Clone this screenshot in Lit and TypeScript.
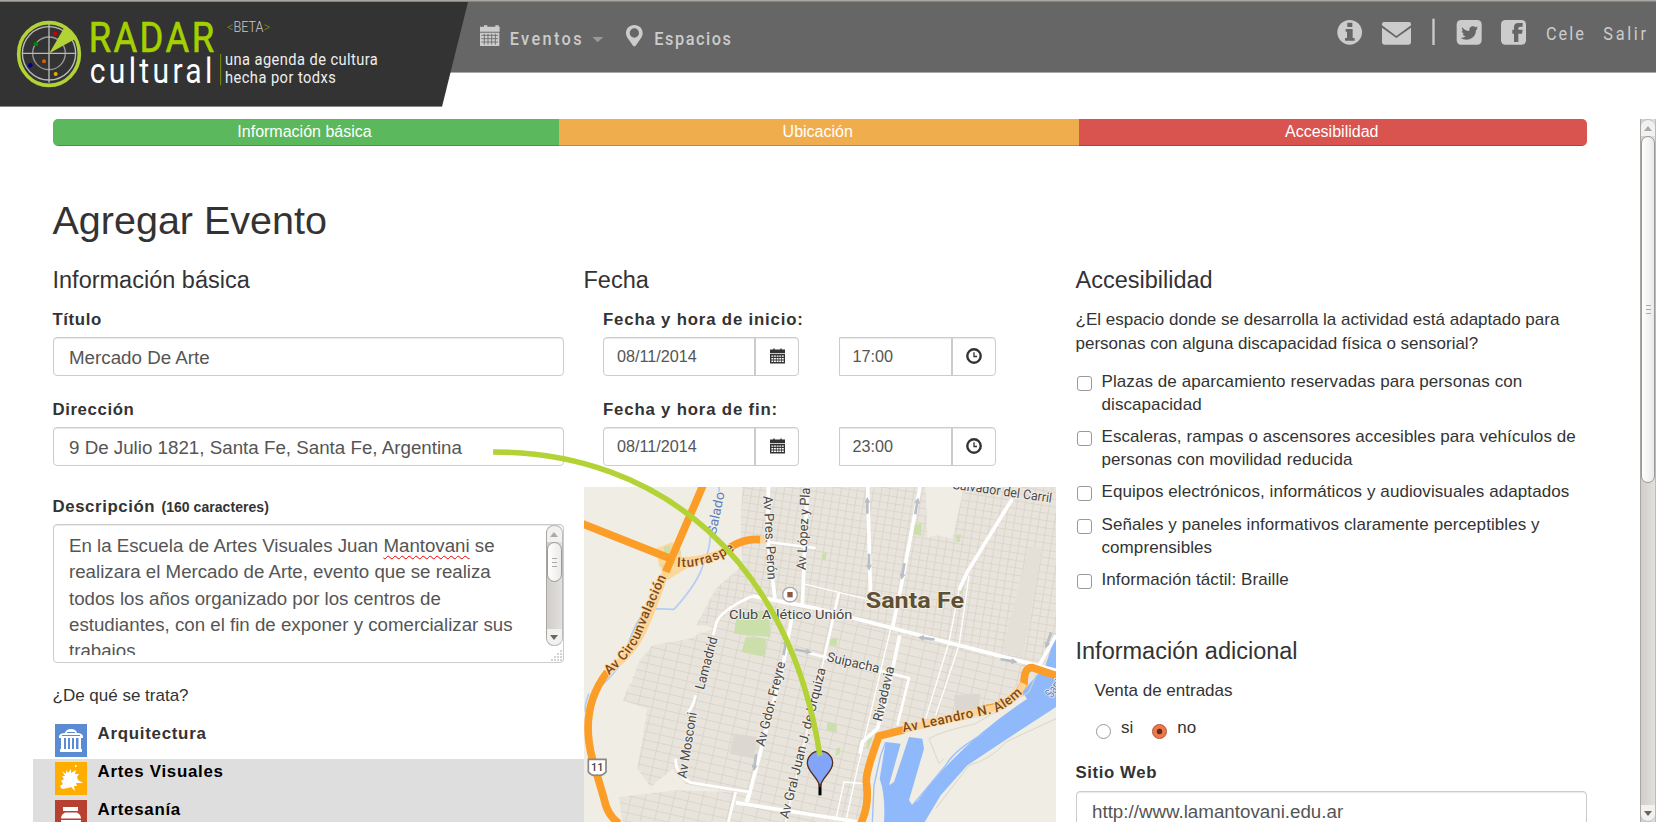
import { LitElement, html, css, svg } from "lit";
import { customElement, property } from "lit/decorators.js";

const calendar = html`<svg class="cal" viewBox="0 0 16 16" fill="currentColor"><path d="M2 1h1.500V0H5v1h6V0h1.500v1H16v4H0V1z"/><path fill-rule="evenodd" d="M0 5.800h16V16H0zM1.500 7.400v1.500h2V7.400zm2.800 0v1.500h2V7.400zm2.800 0v1.500h2V7.400zm2.800 0v1.500h2V7.400zm2.800 0v1.500h2V7.400zM1.500 10.100v1.500h2v-1.500zm2.800 0v1.500h2v-1.500zm2.800 0v1.500h2v-1.500zm2.800 0v1.500h2v-1.500zm2.800 0v1.500h2v-1.500zM1.500 12.900v1.500h2v-1.500zm2.800 0v1.500h2v-1.500zm2.800 0v1.500h2v-1.500zm2.800 0v1.500h2v-1.500zm2.800 0v1.500h2v-1.500z"/></svg>`;
const clock = html`<svg class="clk" viewBox="0 0 16 16" fill="none" stroke="currentColor"><circle cx="8" cy="8" r="6.700" stroke-width="2.400"/><path d="M8 4.200V8.500H11" stroke-width="1.300"/></svg>`;

@customElement("site-header")
export class SiteHeader extends LitElement {
  static styles = css`
    :host { display: block; height: 107px; background: linear-gradient(#aaa59f 0 1px, #88857f 1px 2px, #666 2px 72px, #aaa 72px 73px, #fff 73px); font-family: Roboto, "Liberation Sans", sans-serif; color: #ccc; }
    .bar { display: flex; align-items: flex-start; height: 107px; }
    .logo { width: 480px; height: 107px; flex: none; display: block; }
    .nav { display: block; flex: none; width: 280px; height: 72px; }
    .tools { display: block; flex: none; margin-left: auto; width: 356px; height: 72px; }
  `;
  render() {
    return html`<div class="bar">
      <svg class="logo" viewBox="0 0 1440 321">
        <path d="M0 6H1404L1326 320H0z" fill="#333"/><path d="M0 319.500H1325" stroke="#888" stroke-width="3"/>
        <ellipse cx="147" cy="162" rx="91" ry="94" fill="#333" stroke="#b2d235" stroke-width="11"/>
        <g fill="none" stroke="#bbb" stroke-width="4"><circle cx="147" cy="160" r="80"/><circle cx="147" cy="160" r="49" stroke="#999"/><path d="M147 72V248M67 160H228"/></g>
        <path d="M148 160L192 84Q214 94 227 116z" fill="#b2d235"/>
        <circle cx="165" cy="101" r="6.500" fill="#c00"/><circle cx="108" cy="132" r="7" fill="#080"/><circle cx="132" cy="184" r="6" fill="#e06000"/><circle cx="91" cy="196" r="7" fill="#008"/><circle cx="167" cy="222" r="6" fill="#e0b000"/>
        <g transform="translate(266,157) scale(.84,1)"><text font-size="130" font-weight="400" fill="#a5d000" stroke="#a5d000" stroke-width="2" textLength="448">RADAR</text></g>
        <g transform="translate(269,248) scale(.86,1)"><text font-size="105" fill="#fff" textLength="428">cultural</text></g>
        <path d="M662 162V256" stroke="#7a9600" stroke-width="3"/>
        <text x="681" y="97" font-size="46" font-weight="300" fill="#ccc" textLength="129" lengthAdjust="spacingAndGlyphs"><tspan fill="#7a9600">&lt;</tspan>BETA<tspan fill="#7a9600">&gt;</tspan></text>
        <g transform="translate(675,196) scale(.88,1)"><text font-size="50" fill="#eee" textLength="521">una agenda de cultura</text></g>
        <g transform="translate(675,248) scale(.88,1)"><text font-size="50" fill="#eee" textLength="378">hecha por todxs</text></g>
      </svg>
      <svg class="nav" viewBox="0 0 840 216" fill="#ccc">
        <g><path d="M12 76h10v4h24v-4h10v4h3v15H0V80h12z"/><path d="M0 98H58V138H0z"/><path d="M4 106H54M4 116H54M4 126H54M13 101V134M24 101V134M35 101V134M46 101V134" stroke="#666" stroke-width="2.500"/></g>
        <g transform="translate(89,135) scale(.86,1)"><text font-size="57" font-weight="500" textLength="251">Eventos</text></g>
        <path d="M337 111H370L353 127z" fill="#999"/>
        <path fill-rule="evenodd" d="M463 75C448 75 438 86 438 99C438 109 443 114 447 120L459 137Q463 140 467 137L479 120C483 114 488 109 488 99C488 86 478 75 463 75zM463 85A14 14 0 1 0 463 113A14 14 0 1 0 463 85z"/>
        <g transform="translate(523,135) scale(.86,1)"><text font-size="57" font-weight="500" textLength="267">Espacios</text></g>
      </svg>
      <svg class="tools" viewBox="0 0 1068 216" fill="#ccc">
        <circle cx="149" cy="97" r="37"/><path fill="#666" d="M142 68h15v13h-15zM137 87h21v27h6v8h-29v-8h6V95h-4z"/>
        <path d="M252 66h75q6 0 6 6v4L289 108L246 76v-4q0-6 6-6zM246 83L289 114L333 83v44q0 7-7 7H253q-7 0-7-7z"/>
        <path d="M397 56h7v79h-7z"/>
        <rect x="470" y="60" width="75" height="74" rx="13"/>
        <path fill="#666" d="M486 82Q495 93 508 93C506 76 524 77 526 82L533 79L530 85L533 86L528 91C527 110 514 119 500 119Q489 119 482 114Q492 114 497 109Q489 107 488 102H492Q485 98 485 92L489 93Q484 87 486 82z"/>
        <rect x="603" y="60" width="75" height="74" rx="13"/><path fill="#666" d="M642 126V101H637V89H642V81Q642 69 655 69H668V80H660Q655 80 655 85V89H668L666 101H655V126z"/>
        <g transform="translate(738,119) scale(.86,1)"><text font-size="57" textLength="132">Cele</text></g><g transform="translate(910,119) scale(.86,1)"><text font-size="57" textLength="149">Salir</text></g>
      </svg>
    </div>`;
  }
}

@customElement("city-map")
export class CityMap extends LitElement {
  static styles = css`
    :host { display: block; }
    svg { display: block; width: 100%; height: 100%; }
    .lb { font-family: Roboto, sans-serif; font-size: 40px; fill: #484848; stroke: #f4f1eb; stroke-width: 5px; paint-order: stroke; stroke-linejoin: round; }
    .hw { fill: #7b4a1e; stroke: #ffd9a0; font-weight: 500; }
    .water { fill: #5b7fb8; }
    .poi { fill: #444; }
    .city { font-size: 65px; font-weight: 700; fill: #5f4f33; }
  `;
  private arrow(x: number, y: number, r: number) {
    return svg`<path transform="translate(${x},${y}) rotate(${r})" d="M-25 -4H8V-9L26 0L8 9V4H-25z" fill="#b8bec6"/>`;
  }
  private label(x: number, y: number, r: number, len: number, t: string, cls = "") {
    return svg`<text class="lb ${cls}" transform="translate(${x},${y}) rotate(${r})" textLength="${len}" lengthAdjust="spacingAndGlyphs">${t}</text>`;
  }
  render() {
    return html`<svg viewBox="25 35 1416 1005" preserveAspectRatio="none">
      <defs>
        <pattern id="g" width="24" height="22" patternUnits="userSpaceOnUse" patternTransform="rotate(9)"><path d="M0 1H24M1 0V22" stroke="#d6d1c7" stroke-width="2.500"/></pattern>
        <pattern id="h" width="42" height="25" patternUnits="userSpaceOnUse" patternTransform="rotate(13)"><path d="M0 1H42M1 0V25" stroke="#d6d1c7" stroke-width="2.500"/></pattern>
        <path id="iturraspe" d="M303 274Q400 282 490 214"/><path id="circ" d="M100 600Q175 535 200 470T282 285"/>
        <path id="alem" d="M983 771L1260 712Q1310 690 1362 632"/>
      </defs>
      <path d="M25 35H1441V1040H25z" fill="#f0ede5"/>
      <path d="M500 35H1441V640L1330 660L1220 725L915 775L880 860V920L850 1040H140L130 965L300 945L460 950L330 925L290 880L225 935L185 880L215 700L140 675L160 640L190 560L230 510L340 490L425 455L362 450L420 340L500 270L495 150z" fill="#e8e4dc"/>
      <path d="M500 35H1441V600L1350 575L725 415L540 360L420 440L362 450L420 340L500 270L495 150z" fill="url(#g)"/>
      <path d="M425 440L540 360L725 400L1350 575L1360 600L1220 725L915 775L850 1040H140L130 965L300 945L460 950L330 925L290 880L225 935L185 880L215 700L140 675L190 560L230 510L340 490z" fill="url(#h)"/>
      <path d="M1050 35H1165L1130 190L1085 180L1055 187z" fill="#f0ede5"/>
      <path d="M1360 215L1400 220L1340 545L1280 530z" fill="#e4e0d8"/>
      <path d="M475 775L545 785L535 850L462 835z" fill="#dcd7d0"/><path d="M1135 660L1215 655L1208 705L1140 710z" fill="#dcd7d0"/>
      <g fill="#cbdfaa"><path d="M485 410L580 405L585 485L475 475zM510 485L572 490L568 545L498 530z"/><path d="M1015 148l22-5v38l-24-4zM1142 180l14-4l-4 24h-10zM740 235l14-4l-5 24h-10zM762 492l22-5v25l-22-2zM755 740l28 5v25l-30-5zM782 820l12-5l-2 20l-12 8zM1150 340l12-4l-4 20h-12zM875 790l15-4l-10 30l-8 3z"/></g>
      <path d="M240 220L290 200L340 275L275 315L250 270z" fill="#fbd99a"/><path d="M265 215l20-5l-5 30l-15-5zM290 240l22-25l5 20zM255 265l25 8l-10 20z" fill="#cbdfaa"/>
      <path d="M430 35Q435 70 405 160Q405 220 385 260Q370 320 295 402L230 400Q190 410 160 500Q155 560 80 628M40 655Q25 690 30 710" fill="none" stroke="#b3cdf5" stroke-width="5"/>
      <path d="M1441 475L1410 570L1340 650L1340 670Q1140 805 1010 990L1000 975L1045 820L1040 790L1000 785L955 920L940 930L975 805L930 800L912 910Q930 960 925 1040H1047L1095 960L1175 870L1280 800L1441 695z" fill="#8fb9fb"/>
      <path d="M1350 665Q1140 805 1018 975" fill="none" stroke="#f0ede5" stroke-width="14"/>
      <path d="M890 1040L895 930L915 840L930 800M1225 775Q1140 820 1110 870L1010 990" fill="none" stroke="#9bc0fa" stroke-width="4"/>
      <path d="M1385 590L1360 650L1200 745Q1090 770 1060 790L1090 865L1105 850M1441 730L1290 800Q1250 850 1180 870L1080 1000" fill="none" stroke="#dcd6ca" stroke-width="3"/>
      <g fill="none" stroke="#fff" stroke-linejoin="round">
        <path stroke-width="11" d="M578 35L577 200L598 370M695 35L680 390M530 362L725 400L1441 585M650 420L620 580L515 980M480 982L850 1040M876 35L885 380M1033 35L975 340L950 460M972 480L930 680L905 760L860 800L853 835M1310 70L1175 290L1150 345M1441 480L1385 580"/>
        <path stroke-width="8" d="M530 362Q425 410 420 450L412 480M575 200L720 218M790 350L745 550M690 530L745 545L1000 608L965 750M360 660Q350 700 335 712M300 850Q300 900 345 922L520 950L510 980M480 950L458 1040"/>
        <path stroke-width="4" d="M680 325L890 375M745 550L630 1040M1150 345L1120 500L1050 730M1180 300L1150 510L1080 720M945 460L845 880L810 1040M780 1035L805 920L865 925"/>
      </g>
      ${this.arrow(875, 90, -90)}${this.arrow(880, 260, 90)}${this.arrow(1023, 92, -80)}${this.arrow(982, 288, 100)}${this.arrow(1052, 489, 188)}${this.arrow(1300, 556, 10)}${this.arrow(1418, 495, 110)}${this.arrow(628, 515, -80)}${this.arrow(538, 862, 98)}${this.arrow(683, 527, 10)}
      <g fill="none" stroke="#fb9d26" stroke-width="23" stroke-linejoin="round">
        <path d="M382 30L270 290M20 145L290 252M465 215Q510 188 555 193"/>
        <path d="M95 590Q10 700 50 850L85 970Q95 1020 130 1045"/>
        <path d="M855 1045Q882 990 872 920Q870 890 910 782L985 763M1230 700Q1310 690 1345 625Q1345 575 1370 577L1441 601"/>
      </g>
      <path d="M300 255Q400 260 465 215M95 590Q170 535 200 470T270 290M985 763L1245 700Q1310 690 1345 625M553 193H575" fill="none" stroke="#ffd391" stroke-width="21"/>
      <text class="lb hw" textLength="185"><textPath href="#iturraspe">Iturraspe</textPath></text>
      <text class="lb hw" textLength="345"><textPath href="#circ">Av Circunvalación</textPath></text>
      <text class="lb hw" textLength="383"><textPath href="#alem">Av Leandro N. Alem</textPath></text>
      ${this.label(420, 180, -78, 130, "Salado", "water")}
      ${this.label(563, 62, 87, 252, "Av Pres. Perón")}
      ${this.label(690, 285, -87, 248, "Av López y Pla")}
      ${this.label(1130, 40, 8, 300, "Salvador del Carril")}
      ${this.label(384, 645, -75, 162, "Lamadrid")}
      ${this.label(332, 910, -81, 200, "Av Mosconi")}
      ${this.label(566, 815, -76, 260, "Av Gdor. Freyre")}
      ${this.label(638, 1032, -76, 465, "Av Gral Juan J. de Urquiza")}
      ${this.label(752, 557, 13, 160, "Suipacha")}
      ${this.label(918, 740, -77, 168, "Rivadavia")}
      ${this.label(1428, 670, -55, 75, "Santa", "water")}
      ${this.label(460, 430, 0, 370, "Club Atlético Unión", "poi")}
      ${this.label(870, 397, 0, 295, "Santa Fe", "city")}
      <circle cx="643" cy="358" r="22" fill="#fff" stroke="#aaa" stroke-width="4"/><path d="M635 350h16v16h-16z" fill="#8a5a40"/>
      <path d="M38 852H91V890Q80 903 64 899Q48 903 38 890z" fill="#fff" stroke="#888" stroke-width="5"/><text x="46" y="888" font-family="Roboto" font-size="33" font-weight="500" fill="#444">11</text>
      <path d="M733 925V960" stroke="#000" stroke-width="9"/><path d="M733 935C728 905 695 890 695 863A38 36 0 0 1 771 863C771 890 738 905 733 935z" fill="#82a5fa" stroke="#5a3020" stroke-width="4"/>
    </svg>`;
  }
}

@customElement("scroll-bar")
export class ScrollBar extends LitElement {
  @property() size = "page";
  static styles = css`
    :host { display: flex; flex-direction: column; box-sizing: border-box; background: linear-gradient(90deg, #d0cdca, #e2e0de); border-left: 1px solid #aaa6a2; border-right: 1px solid #bbb; }
    .btn { height: 17px; display: flex; align-items: center; justify-content: center; background: #f2f1f0; color: #aaa; flex: none; box-sizing: border-box; }
    .up { border-radius: 8px 8px 0 0; border-top: 1px solid #bbb; } .down { border-radius: 0 0 8px 8px; margin-top: auto; color: #666; border-bottom: 1px solid #bbb; }
    .thumb { box-sizing: border-box; border: 1px solid #999; border-radius: 8px; background: linear-gradient(90deg, #fff, #eceae8); display: flex; flex-direction: column; align-items: center; justify-content: center; gap: 3px; }
    .page { height: 347px; } .area { height: 40px; }
    .grip { width: 5px; height: 1px; background: #aaa; }
    svg { width: 8px; height: 5px; }
  `;
  render() {
    return html`<div class="btn up"><svg viewBox="0 0 8 5"><path fill="currentColor" d="M0 5L4 0L8 5z"/></svg></div>
      <div class="thumb ${this.size}"><div class="grip"></div><div class="grip"></div><div class="grip"></div></div>
      <div class="btn down"><svg viewBox="0 0 8 5"><path fill="currentColor" d="M0 0L4 5L8 0z"/></svg></div>`;
  }
}

const options = [
  ["Plazas de aparcamiento reservadas para personas con", "discapacidad"],
  ["Escaleras, rampas o ascensores accesibles para vehículos de", "personas con movilidad reducida"],
  ["Equipos electrónicos, informáticos y audiovisuales adaptados"],
  ["Señales y paneles informativos claramente perceptibles y", "comprensibles"],
  ["Información táctil: Braille"],
];

@customElement("app-root")
export class AppRoot extends LitElement {
  static styles = css`
    :host { display: block; position: relative; width: 1656px; height: 822px; overflow: hidden; background: #fff; color: #333; font: 17px/24px "Liberation Sans", Arial, sans-serif; }
    .page { display: flex; justify-content: space-between; height: 703px; margin-top: 12px; }
    .content { width: 1534px; margin-left: 52.500px; }
    .side { width: 16px; height: 703px; }
    .progress { display: flex; height: 27px; border-radius: 5px; overflow: hidden; color: #fff; text-align: center; font-size: 16px; line-height: 25px; }
    .step { box-sizing: border-box; border-bottom: 1px solid rgba(0,0,0,.2); padding-right: 2px; }
    .ok { background: #5cb85c; width: 506px; } .warn { background: #f0ad4e; width: 520.500px; } .bad { background: #d9534f; flex: 1; }
    h1, h3, p { margin: 0; font-weight: 400; }
    h1 { font-size: 39.500px; line-height: 44px; margin-top: 51.500px; }
    h3 { font-size: 23.500px; line-height: 26px; }
    .cols { display: grid; grid-template-columns: 511px 472px 511px; column-gap: 20px; margin-top: 25.500px; }
    .label { font-weight: 700; font-size: 16.800px; letter-spacing: .6px; line-height: 24px; margin: 22px 0 5px; white-space: nowrap; }
    .first { margin-top: 15px; }
    .desc { margin: 28.500px 0 5.500px; }
    .small { font-size: 14px; letter-spacing: .05px; margin-left: 1px; }
    .field { box-sizing: border-box; height: 39px; border: 1px solid #ccc; border-radius: 4px; box-shadow: inset 0 1px 1px rgba(0,0,0,.09); padding: 0 15.500px; font-size: 18.750px; line-height: 39px; color: #555; white-space: nowrap; background: #fff; }
    .area { box-sizing: border-box; height: 139px; border: 1px solid #ccc; border-radius: 4px; display: flex; justify-content: space-between; color: #555; font-size: 18.700px; line-height: 26.350px; overflow: hidden; box-shadow: inset 0 1px 1px rgba(0,0,0,.09); }
    .text { height: 122px; margin-top: 8px; padding-left: 15.500px; overflow: hidden; white-space: nowrap; }
    .typo { text-decoration: underline wavy #e00 1px; text-underline-offset: 3px; text-decoration-skip-ink: none; }
    .rail { width: 18px; display: flex; flex-direction: column; justify-content: space-between; align-items: flex-end; }
    .bar { width: 17px; height: 121px; border-radius: 8px; }
    .corner { width: 13px; height: 13px; }
    .ask { margin-top: 21px; }
    .cats { margin: 13px 0 0 -20px; width: 551px; }
    .cat { display: flex; height: 38px; box-sizing: border-box; padding-left: 22px; gap: 11px; }
    .on { background: #dedede; color: #000; }
    .ico { width: 32px; height: 33px; margin-top: 3px; }
    .name { font-weight: 700; font-size: 16.900px; letter-spacing: .72px; margin-top: 1px; }
    .when { padding-left: 19.500px; }
    .wide { letter-spacing: .82px; }
    .row { display: flex; gap: 39.500px; }
    .group { display: flex; height: 39px; box-sizing: border-box; border: 1px solid #ccc; border-radius: 4px; color: #555; font-size: 16.200px; line-height: 37px; box-shadow: inset 0 1px 1px rgba(0,0,0,.09); background: #fff; }
    .date { width: 196px; } .time { width: 157px; border-radius: 0 4px 4px 0; }
    .val { flex: 1; padding-left: 13px; }
    .add { width: 44px; border-left: 2px solid #ccc; box-sizing: border-box; display: flex; align-items: center; justify-content: center; color: #333; padding-bottom: 2px; }
    .cal { width: 15px; height: 16px; } .clk { width: 16px; height: 16px; }
    .map { height: 335px; margin-top: 21px; }
    .para { margin-top: 15px; line-height: 23.600px; white-space: nowrap; }
    .list { margin-top: 14.500px; display: flex; flex-direction: column; gap: 7.800px; line-height: 23.600px; letter-spacing: .08px; }
    .opt { display: flex; gap: 10px; min-height: 25.200px; white-space: nowrap; }
    .box { box-sizing: border-box; width: 15px; height: 15px; margin: 6px 0 0 1px; border: 1px solid #999; border-radius: 3px; background: #fff; flex: none; }
    .extra { margin-top: 45.500px; }
    .sale { margin: 14.500px 0 0 19px; }
    .radios { display: flex; margin: 13.500px 0 0 20.500px; }
    .dot { box-sizing: border-box; width: 15px; height: 15px; margin: 8px 10px 0 0; border: 1px solid #999; border-radius: 50%; }
    .sel { border-color: #a85038; background: radial-gradient(circle, #5a3020 0 2.500px, #f0774a 3.200px); margin-left: 19px; }
    .web { margin: 21px 0 6px; letter-spacing: .6px; }
    .link { position: absolute; inset: 0; width: 1656px; height: 822px; pointer-events: none; }
  `;
  private line(date: string, time: string) {
    return html`<div class="row"><div class="group date"><div class="val">${date}</div><div class="add">${calendar}</div></div><div class="group time"><div class="val">${time}</div><div class="add">${clock}</div></div></div>`;
  }
  render() {
    return html`<site-header></site-header>
    <div class="page"><div class="content">
      <div class="progress"><div class="step ok">Información básica</div><div class="step warn">Ubicación</div><div class="step bad">Accesibilidad</div></div>
      <h1>Agregar Evento</h1>
      <div class="cols">
        <section>
          <h3>Información básica</h3>
          <div class="label first">Título</div><div class="field">Mercado De Arte</div>
          <div class="label">Dirección</div><div class="field">9 De Julio 1821, Santa Fe, Santa Fe, Argentina</div>
          <div class="label desc">Descripción <span class="small">(160 caracteres)</span></div>
          <div class="area"><div class="text">En la Escuela de Artes Visuales Juan <span class="typo">Mantovani</span> se<br>realizara el Mercado de Arte, evento que se realiza<br>todos los años organizado por los centros de<br>estudiantes, con el fin de exponer y comercializar sus<br>trabajos</div>
            <div class="rail"><scroll-bar class="bar" size="area"></scroll-bar><svg class="corner" viewBox="0 0 13 13"><path d="M10 2h2M7 5h2M10 5h2M4 8h2M7 8h2M10 8h2M1 11h2M4 11h2M7 11h2M10 11h2" stroke="#aaa" stroke-width="1.200"/></svg></div></div>
          <div class="ask">¿De qué se trata?</div>
          <div class="cats">
            <div class="cat"><svg class="ico" viewBox="0 0 32 33"><path fill="#5b8bd3" d="M0 0h32v33H0z"/><path fill="#fff" d="M4 12Q5 9 10 9Q11 5 16 5Q21 5 22 9Q27 9 28 12V14H4zM6 14h3v11H6zM11 14h2v11h-2zM15 14h2v11h-2zM19 14h2v11h-2zM23.500 14h2.500v11h-2.500zM5 25h22v3H5z"/><path d="M7 11.500H25M12 8.500H20" stroke="#5b8bd3"/></svg><div class="name">Arquitectura</div></div>
            <div class="cat on"><svg class="ico" viewBox="0 0 32 33"><path fill="#ffae00" d="M0 0h32v33H0z"/><path fill="#fff" d="M7 9l4 3l0-4l2 3l3-4l0 4l5-3l-1 4l4 0l-2 3l1 3l5 3l-7 0l1 3l-3 0l1 5l-4-4l-3 1l-6 1l-2-3l3-2l-2-3l3-2l-2-3l3 0z"/><path fill="#fff" d="M20 3h1.500v2H20z"/></svg><div class="name">Artes Visuales</div></div>
            <div class="cat on"><svg class="ico" viewBox="0 0 32 33"><path fill="#b84030" d="M0 0h32v33H0z"/><path fill="#fff" d="M8 7h15v4H8zM10 12.500h12q4 2 4 6H6q0-4 4-6zM6 20h20q0 5-5 8H11q-5-3-5-8z"/></svg><div class="name">Artesanía</div></div>
          </div>
        </section>
        <section>
          <h3>Fecha</h3>
          <div class="when">
            <div class="label first wide">Fecha y hora de inicio:</div>${this.line("08/11/2014", "17:00")}
            <div class="label wide">Fecha y hora de fin:</div>${this.line("08/11/2014", "23:00")}
          </div>
          <city-map class="map"></city-map>
        </section>
        <section>
          <h3>Accesibilidad</h3>
          <p class="para">¿El espacio donde se desarrolla la actividad está adaptado para<br>personas con alguna discapacidad física o sensorial?</p>
          <div class="list">${options.map((o) => html`<div class="opt"><span class="box"></span><div>${o.map((l) => html`<div>${l}</div>`)}</div></div>`)}</div>
          <h3 class="extra">Información adicional</h3>
          <div class="sale">Venta de entradas</div>
          <div class="radios"><span class="dot"></span>si<span class="dot sel"></span>no</div>
          <div class="label web">Sitio Web</div><div class="field">http://www.lamantovani.edu.ar</div>
        </section>
      </div>
    </div><scroll-bar class="side"></scroll-bar></div>
    <svg class="link" viewBox="0 0 1656 822"><path d="M493 452C660 452 790 560 820 756" fill="none" stroke="#b2d235" stroke-width="5.500"/></svg>`;
  }
}
